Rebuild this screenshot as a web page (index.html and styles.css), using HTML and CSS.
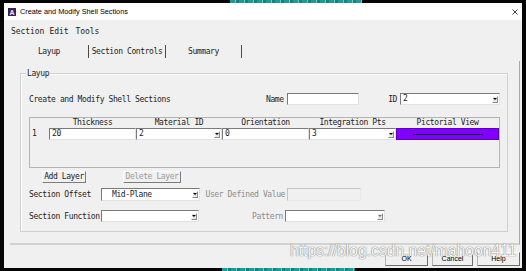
FILE: index.html
```html
<!DOCTYPE html>
<html lang="en">
<head>
    <meta charset="UTF-8">
    <title>Create and Modify Shell Sections</title>
    <link rel="stylesheet" href="styles.css">
</head>
<body>
    <span class="desk desk-top"></span>
    <span class="desk desk-bottom"></span>
    <div class="window">
        <div class="titlebar">
            <svg class="app-icon" viewBox="0 0 8 8"><rect width="8" height="8" fill="#3b2150"/><text x="4" y="7" font-family="Liberation Sans, sans-serif" font-size="7" font-weight="bold" fill="#f4e8ff" text-anchor="middle">A</text></svg>
            <span class="title">Create and Modify Shell Sections</span>
            <svg class="close" viewBox="0 0 6 6"><path d="M0.5 0.5 L5.5 5.5 M5.5 0.5 L0.5 5.5" stroke="#333" stroke-width="0.9"/></svg>
        </div>
        <div class="menubar">
            <span>Section</span>
            <span>Edit</span>
            <span class="menu-tools">Tools</span>
        </div>
        <div class="tabs">
            <div class="tab tab-layup">Layup</div>
            <div class="tab tab-controls">Section Controls</div>
            <div class="tab tab-summary">Summary</div>
        </div>
        <div class="panel">
            <div class="group">
                <span class="group-title">Layup</span>
                <div class="row row-head">
                    <span class="intro">Create and Modify Shell Sections</span>
                    <span class="name-label">Name</span>
                    <span class="edit name-edit"></span>
                    <span class="id-label">ID</span>
                    <div class="combo id-combo"><span class="combo-value">2</span><span class="combo-btn"></span></div>
                </div>
                <div class="layers">
                    <span></span>
                    <span class="col-head">Thickness</span>
                    <span class="col-head">Material ID</span>
                    <span class="col-head">Orientation</span>
                    <span class="col-head">Integration Pts</span>
                    <span class="col-head">Pictorial View</span>
                    <span class="row-num">1</span>
                    <span class="edit cell-edit">20</span>
                    <div class="combo cell-edit"><span class="combo-value">2</span><span class="combo-btn"></span></div>
                    <span class="edit cell-edit">0</span>
                    <div class="combo cell-edit"><span class="combo-value">3</span><span class="combo-btn"></span></div>
                    <div class="picture"><span class="picture-line"></span></div>
                </div>
                <div class="row row-buttons">
                    <span class="button add-layer">Add Layer</span>
                    <span class="button delete-layer">Delete Layer</span>
                </div>
                <div class="row row-offset">
                    <span class="field-label">Section Offset</span>
                    <div class="combo offset-combo"><span class="combo-value">Mid-Plane</span><span class="combo-btn"></span></div>
                    <span class="side-label">User Defined Value</span>
                    <span class="edit edit-off value-edit"></span>
                </div>
                <div class="row row-function">
                    <span class="field-label">Section Function</span>
                    <div class="combo function-combo"><span class="combo-value"></span><span class="combo-btn"></span></div>
                    <span class="side-label">Pattern</span>
                    <div class="combo edit-off pattern-combo"><span class="combo-value"></span><span class="combo-btn"></span></div>
                </div>
            </div>
        </div>
        <div class="footer">
            <span class="dlg-button ok">OK</span>
            <span class="dlg-button cancel">Cancel</span>
            <span class="dlg-button help">Help</span>
        </div>
    </div>
    <div class="watermark">https://blog.csdn.net/mahoon411</div>
</body>
</html>
```

FILE: styles.css
```css
* {
    box-sizing: border-box;
}
body {
    margin: 0;
    width: 526px;
    height: 271px;
    background: #050505;
    position: relative;
    overflow: hidden;
    font-family: "DejaVu Sans Mono", monospace;
    font-size: 8px;
    letter-spacing: -0.4px;
    color: #1c1c1c;
}
.desk {
    position: absolute;
    height: 3px;
    background: repeating-linear-gradient(90deg, #1c9c98 0 5px, #6fc9c0 5px 6px, #14837f 6px 9px);
}
.desk-top {
    top: 0;
    left: 230px;
    width: 132px;
}
.desk-bottom {
    bottom: 0;
    left: 222px;
    width: 133px;
}
.window {
    margin: 3px 0 0 4px;
    width: 518px;
    height: 265px;
    background: #f0f0f0;
    display: flex;
    flex-direction: column;
}
.titlebar {
    height: 17px;
    flex: none;
    background: #fff;
    display: flex;
    align-items: center;
    padding: 0 4px;
    font-family: "Liberation Sans", Arial, sans-serif;
    font-size: 7.3px;
    letter-spacing: 0;
    color: #000;
}
.app-icon {
    width: 8px;
    height: 8px;
}
.title {
    margin-left: 4px;
    flex: 1;
}
.close {
    width: 6px;
    height: 6px;
}
.menubar {
    height: 22px;
    flex: none;
    display: flex;
    align-items: center;
    gap: 5px;
    padding-left: 7px;
    letter-spacing: -0.05px;
}
.menu-tools {
    margin-left: 2px;
}
.tabs {
    height: 19px;
    flex: none;
    display: flex;
    align-items: flex-start;
    padding: 3px 0 0 6px;
}
.tab {
    height: 13px;
    line-height: 13px;
    border-right: 1px solid #4a4a4a;
    text-align: center;
}
.tab-layup { width: 79px; }
.tab-controls { width: 77px; }
.tab-summary { width: 76px; }
.panel {
    margin-left: 6px;
    width: 510px;
    height: 184px;
    flex: none;
    padding: 12px 0 0 10px;
    border-right: 1px solid #a8a8a8;
    border-bottom: 2px solid #d2d2d2;
}
.group {
    width: 488px;
    height: 159px;
    padding-left: 8px;
    border: 1px solid #d0d0d0;
    box-shadow: inset 1px 1px 0 #fff;
}
.group-title {
    display: block;
    width: max-content;
    height: 11px;
    line-height: 11px;
    margin: -6px 0 0 -3px;
    padding: 0 1px;
    background: #f0f0f0;
}
.row {
    display: flex;
    align-items: center;
}
.row-head {
    margin-top: 14px;
    height: 12px;
}
.intro {
    width: 237px;
}
.name-label {
    width: 21px;
}
.edit {
    display: block;
    height: 12px;
    line-height: 10px;
    padding-left: 2px;
    background: #fff;
    border: 1px solid;
    border-color: #7a7a7a #e2e2e2 #e2e2e2 #7a7a7a;
}
.edit-off {
    background: #f0f0f0;
    border-color: #c4c4c4 #e8e8e8 #e8e8e8 #c4c4c4;
}
.name-edit {
    width: 72px;
}
.id-label {
    width: 41px;
    padding-right: 3px;
    text-align: right;
}
.combo {
    display: flex;
    align-items: center;
    height: 12px;
    background: #fff;
    border: 1px solid;
    border-color: #7a7a7a #e2e2e2 #e2e2e2 #7a7a7a;
}
.combo-value {
    flex: 1;
    padding-left: 2px;
    line-height: 10px;
}
.combo-btn {
    position: relative;
    width: 6px;
    height: 7px;
    margin-right: 1px;
    border: 1px solid #8a8a8a;
    border-top-color: #fff;
    border-left-color: #fff;
    background: #e8e8e8;
}
.combo-btn::after {
    content: "";
    position: absolute;
    left: 0;
    top: 1px;
    border-left: 2px solid transparent;
    border-right: 2px solid transparent;
    border-top: 2px solid #000;
}
.edit-off .combo-btn::after {
    border-top-color: #777;
}
.id-combo {
    width: 100px;
}
.layers {
    margin-top: 12px;
    width: 471px;
    height: 51px;
    border: 1px solid #b4b4b4;
    display: grid;
    grid-template-columns: 19px 87px 86px 87px 87px 103px;
    grid-template-rows: 10px 12px;
    align-content: start;
}
.col-head {
    text-align: center;
    line-height: 10px;
}
.row-num {
    padding-left: 2px;
    line-height: 12px;
}
.cell-edit {
    width: auto;
}
.picture {
    display: flex;
    align-items: center;
    justify-content: center;
    background: #8000ff;
    border: 1px solid #5c00b8;
}
.picture-line {
    width: 70px;
    height: 1px;
    background: #000;
}
.row-buttons {
    margin-top: 3px;
    height: 12px;
    padding-left: 13px;
}
.button {
    height: 12px;
    line-height: 10px;
    text-align: center;
    border: 1px solid;
    border-color: #fff #7c7c7c #7c7c7c #fff;
}
.add-layer {
    width: 44px;
}
.delete-layer {
    width: 58px;
    margin-left: 37px;
    color: #9a9a9a;
}
.row-offset {
    margin-top: 5px;
    height: 13px;
}
.row-offset .combo,
.row-offset .edit {
    height: 13px;
}
.row-function {
    margin-top: 9px;
    height: 12px;
}
.field-label {
    width: 72px;
}
.offset-combo {
    width: 99px;
}
.offset-combo .combo-value {
    padding-left: 10px;
}
.function-combo {
    width: 98px;
}
.side-label {
    width: 86px;
    padding-right: 2px;
    text-align: right;
    color: #8c8c8c;
}
.row-offset .side-label {
    width: 87px;
}
.value-edit {
    width: 74px;
}
.pattern-combo {
    width: 100px;
}
.footer {
    flex: 1;
    display: flex;
    justify-content: flex-end;
    gap: 4px;
    padding: 7px 2px 0 0;
}
.dlg-button {
    height: 14px;
    line-height: 12px;
    text-align: center;
    font-family: "Liberation Sans", Arial, sans-serif;
    font-size: 7px;
    letter-spacing: 0;
    color: #000;
    border: 1px solid;
    border-color: #fff #6d6d6d #6d6d6d #b4b4b4;
}
.ok { width: 43px; }
.cancel { width: 41px; }
.help { width: 43px; }
.watermark {
    position: absolute;
    left: 290px;
    top: 243px;
    line-height: 16px;
    font-family: "Liberation Sans", Arial, sans-serif;
    font-size: 15.7px;
    letter-spacing: 0;
    color: rgba(255, 255, 255, 0.95);
    text-shadow: 0 0 1px rgba(90, 90, 90, 0.9), 0 0 1px rgba(120, 120, 120, 0.6);
    white-space: nowrap;
}
```
